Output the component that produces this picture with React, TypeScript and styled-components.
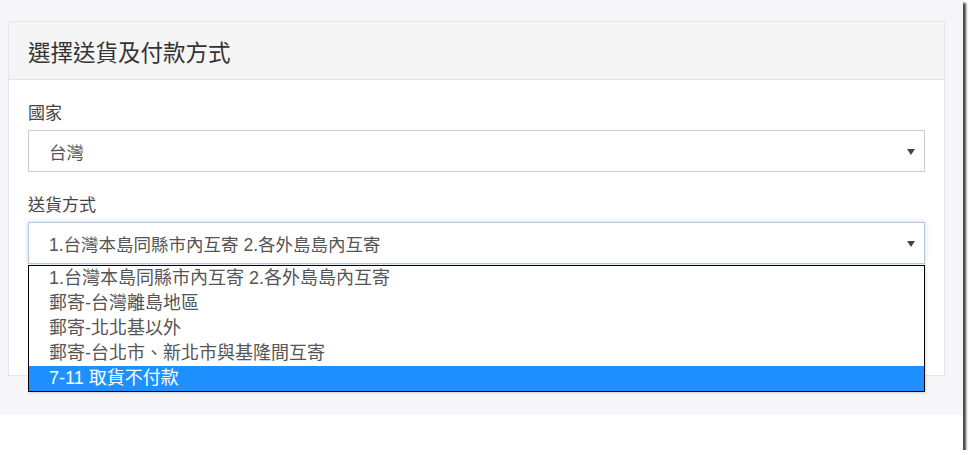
import React from "react";
import styled, { createGlobalStyle } from "styled-components";

const GlobalStyle = createGlobalStyle`
  body {
    margin: 0;
    background: #ffffff;
    font-family: "Liberation Sans", "Noto Sans CJK TC", sans-serif;
  }
`;

const shippingOptions = [
  "1.台灣本島同縣市內互寄 2.各外島島內互寄",
  "郵寄-台灣離島地區",
  "郵寄-北北基以外",
  "郵寄-台北市、新北市與基隆間互寄",
  "7-11 取貨不付款",
];

const Caret = () => (
  <CaretIcon width="8" height="6" viewBox="0 0 8 6">
    <path d="M0 0 H8 L4 6 Z" fill="#444" />
  </CaretIcon>
);

export default function App() {
  return (
    <>
      <GlobalStyle />
      <Frame>
        <Page>
          <Panel>
            <PanelHeading>選擇送貨及付款方式</PanelHeading>
            <PanelBody>
              <FormGroup>
                <Label>國家</Label>
                <Select>
                  <SelectText>台灣</SelectText>
                  <Caret />
                </Select>
              </FormGroup>
              <FormGroup>
                <Label>送貨方式</Label>
                <Select $focused>
                  <SelectText>{shippingOptions[0]}</SelectText>
                  <Caret />
                  <OptionList>
                    {shippingOptions.map((opt, i) => (
                      <Option key={opt} $active={i === shippingOptions.length - 1}>
                        {opt}
                      </Option>
                    ))}
                  </OptionList>
                </Select>
              </FormGroup>
            </PanelBody>
          </Panel>
        </Page>
        <Footer />
      </Frame>
    </>
  );
}

const Frame = styled.div`
  width: 963px;
  height: 450px;
  background: #ffffff;
  box-shadow: 3px 3px 2px rgba(40, 40, 40, 0.85);
  display: flex;
  flex-direction: column;
`;

const Page = styled.div`
  height: 415px;
  background: #f6f6f8;
  padding: 21px 18px 0 8px;
  box-sizing: border-box;
`;

const Footer = styled.div`
  flex: 1;
  background: #ffffff;
`;

const Panel = styled.div`
  background: #ffffff;
  border: 1px solid #e6e6e6;
`;

const PanelHeading = styled.div`
  height: 57px;
  background: #f5f5f5;
  border-bottom: 1px solid #e3e3e3;
  padding: 0 19px;
  display: flex;
  align-items: center;
  font-size: 22.5px;
  color: #333;
  font-family: "Noto Sans CJK TC", sans-serif;
`;

const PanelBody = styled.div`
  padding: 19px 19px 111px;
  display: flex;
  flex-direction: column;
  gap: 19px;
`;

const FormGroup = styled.div`
  display: flex;
  flex-direction: column;
  gap: 5px;
`;

const Label = styled.div`
  font-size: 17px;
  line-height: 26px;
  color: #444;
  font-family: "Noto Sans CJK TC", sans-serif;
`;

const Select = styled.div<{ $focused?: boolean }>`
  position: relative;
  height: 42px;
  box-sizing: border-box;
  border: 1px solid ${(p) => (p.$focused ? "#b8c6d8" : "#cccccc")};
  box-shadow: ${(p) => (p.$focused ? "0 0 5px rgba(102, 150, 220, 0.35)" : "none")};
  background: #ffffff;
  display: flex;
  align-items: center;
  padding: 0 9px 0 20px;
`;

const SelectText = styled.span`
  flex: 1;
  font-size: 17.5px;
  color: #555;
  white-space: nowrap;
`;

const CaretIcon = styled.svg`
  flex: none;
  margin-top: 1px;
`;

const OptionList = styled.div`
  position: absolute;
  top: calc(100% + 2px);
  left: -1px;
  right: -1px;
  z-index: 2;
  background: #ffffff;
  border: 1px solid #000;
  box-shadow: 1px 1px 2px rgba(0, 0, 0, 0.15);
`;

const Option = styled.div<{ $active?: boolean }>`
  height: 25px;
  line-height: 25px;
  padding: 0 20px;
  font-size: 18px;
  white-space: nowrap;
  color: ${(p) => (p.$active ? "#ffffff" : "#555")};
  background: ${(p) => (p.$active ? "#1e90ff" : "transparent")};
`;
